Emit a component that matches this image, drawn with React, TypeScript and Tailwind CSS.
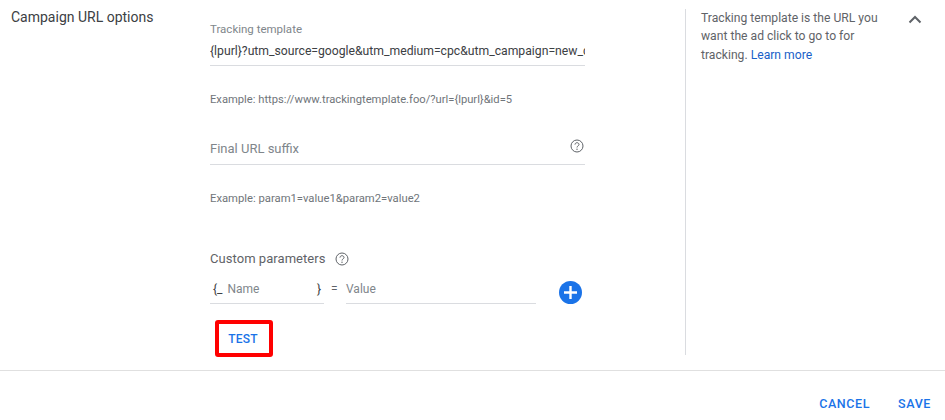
import React from 'react';

const HelpIcon = ({ size = 14 }: { size?: number }) => (
  <svg width={size} height={size} viewBox="0 0 14 14" fill="none" className="text-[#5f6368]">
    <circle cx="7" cy="7" r="6" stroke="currentColor" strokeWidth="1" />
    <path
      d="M5 5.6C5 4.5 5.9 3.7 7 3.7s2 .8 2 1.8c0 1.3-2 1.5-2 3"
      stroke="currentColor"
      strokeWidth="1"
      fill="none"
    />
    <circle cx="7" cy="10.2" r=".7" fill="currentColor" />
  </svg>
);

export default function App() {
  return (
    <div className="w-[945px] h-[420px] bg-white overflow-hidden font-['Roboto',sans-serif]">
      {/* Campaign URL options row */}
      <div className="flex h-[371px] border-b border-[#e0e0e0]">
        <div className="w-[210px] pl-[11px] pt-[8px] text-[14px] leading-[18px] text-[#3c4043]">
          Campaign URL options
        </div>

        <div className="w-[375px] flex flex-col">
          <div className="pt-[22px] text-[11.5px] leading-[15px] text-[#80868b]">Tracking template</div>
          <div className="mt-[5px] h-[24px] border-b border-[#dadce0] text-[12.2px] leading-[18px] text-[#3c4043] overflow-hidden whitespace-nowrap">
            {'{lpurl}?utm_source=google&utm_medium=cpc&utm_campaign=new_campaign'}
          </div>
          <div className="mt-[26px] text-[11.2px] leading-[15px] text-[#70757a]">
            {'Example: https://www.trackingtemplate.foo/?url={lpurl}&id=5'}
          </div>

          <div className="mt-[26px] h-[32px] border-b border-[#dadce0] flex items-start justify-between">
            <span className="mt-[7px] text-[13px] leading-[18px] text-[#80868b]">Final URL suffix</span>
            <span className="mt-[6px] mr-[1px]">
              <HelpIcon />
            </span>
          </div>
          <div className="mt-[26px] text-[11.25px] leading-[15px] text-[#70757a]">
            Example: param1=value1&amp;param2=value2
          </div>

          <div className="mt-[44px] flex items-center gap-[9px] text-[13px] tracking-[0.05px] leading-[18px] text-[#5f6368]">
            Custom parameters
            <HelpIcon />
          </div>

          <div className="mt-[12px] flex items-start">
            <div className="w-[114px] h-[24px] border-b border-[#dadce0] flex justify-between text-[12px] leading-[18px] pl-[3px] pr-[3px]">
              <span className="text-[#3c4043]">
                {'{_'} <span className="text-[#80868b] ml-[2px]">Name</span>
              </span>
              <span className="text-[#3c4043]">{'}'}</span>
            </div>
            <span className="w-[22px] pl-[7px] text-[12px] leading-[18px] text-[#5f6368]">=</span>
            <div className="w-[190px] h-[24px] border-b border-[#dadce0] text-[12px] leading-[18px] text-[#80868b]">
              Value
            </div>
            <div className="ml-[23px] mt-[1px] w-[23px] h-[23px] rounded-full bg-[#1a73e8] flex items-center justify-center">
              <svg width="13" height="13" viewBox="0 0 13 13">
                <path d="M6.5 0v13M0 6.5h13" stroke="#fff" strokeWidth="2.4" />
              </svg>
            </div>
          </div>

          <div className="mt-[16px] ml-[5px] w-[58px] h-[37px] border-[4px] border-[#f00] rounded-[3px] flex items-center justify-center pr-[2px] text-[12px] font-medium tracking-[0.2px] text-[#1a73e8]">
            TEST
          </div>
        </div>

        <div className="ml-[100px] mt-[9px] mb-[15px] w-[260px] border-l border-[#dadce0] pl-[15px] flex items-start">
          <p className="w-[184px] text-[12.15px] leading-[18.3px] text-[#5f6368]">
            Tracking template is the URL you want the ad click to go to for tracking.{' '}
            <span className="text-[#1a5fc8]">Learn more</span>
          </p>
          <svg width="14" height="9" viewBox="0 0 14 9" fill="none" className="ml-[23px] mt-[6px]">
            <path d="M1.5 7.5L7 2l5.5 5.5" stroke="#5f6368" strokeWidth="2" />
          </svg>
        </div>
      </div>

      {/* Footer actions */}
      <div className="flex justify-end items-center gap-[28px] pr-[14px] pt-[24px] text-[12.5px] leading-[18px] font-medium tracking-[0.6px] text-[#1a73e8]">
        <span>CANCEL</span>
        <span>SAVE</span>
      </div>
    </div>
  );
}
